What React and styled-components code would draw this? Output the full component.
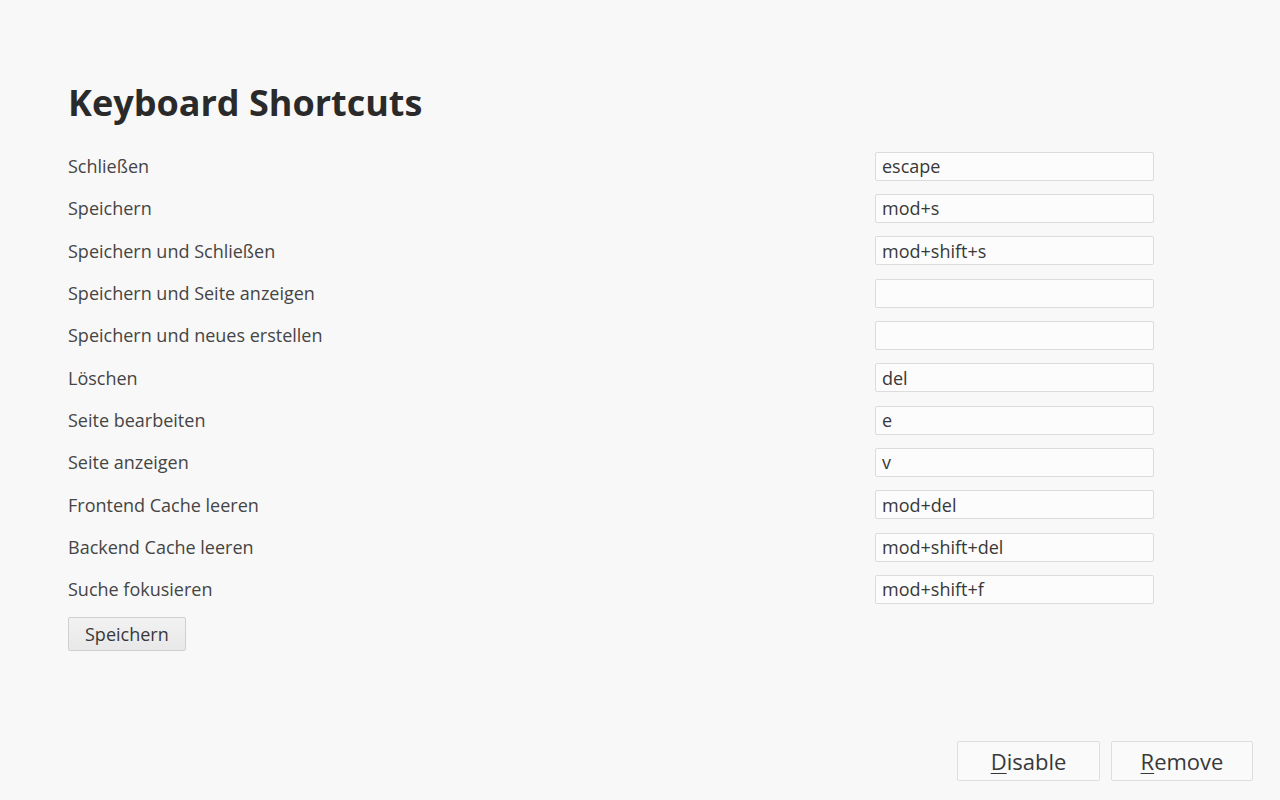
import React from 'react'
import styled, { createGlobalStyle } from 'styled-components'

const GlobalStyle = createGlobalStyle`
  html, body {
    margin: 0;
    padding: 0;
    background: #f8f8f8;
  }
  body {
    font-family: 'Open Sans', 'Noto Sans', sans-serif;
    color: #333;
  }
`

const Page = styled.div`
  display: flex;
  flex-direction: column;
  min-height: 100vh;
  box-sizing: border-box;
`

const Content = styled.div`
  padding: 78px 126px 0 68px;
`

const Title = styled.h1`
  margin: 0 0 17px;
  font-size: 36px;
  font-weight: 700;
  line-height: 50px;
  color: #2a2a2a;
`

const Form = styled.form`
  display: flex;
  flex-direction: column;
`

const Row = styled.label`
  display: flex;
  align-items: center;
  justify-content: space-between;
  height: 42.33px;
  font-size: 18px;
  color: #454545;
`

const KeyInput = styled.input`
  box-sizing: border-box;
  width: 279px;
  height: 29px;
  padding: 0 6px;
  border: 1px solid #dcdcdc;
  border-radius: 2px;
  background: #fcfcfc;
  font-family: inherit;
  font-size: 18px;
  color: #383838;
  outline: none;
`

const SaveButton = styled.button`
  align-self: flex-start;
  margin-top: 6px;
  height: 34px;
  padding: 0 16px;
  border: 1px solid #d0d0d0;
  border-radius: 2px;
  background: linear-gradient(#f2f2f2, #e8e8e8);
  font-family: inherit;
  font-size: 18px;
  color: #383838;
`

const Footer = styled.div`
  margin-top: auto;
  display: flex;
  justify-content: flex-end;
  gap: 11px;
  padding: 0 27px 19px 0;
`

const DialogButton = styled.button`
  width: ${({ $wide }) => ($wide ? 143 : 142)}px;
  height: 40px;
  border: 1px solid #dedede;
  border-radius: 2px;
  background: #fafafa;
  font-family: inherit;
  font-size: 22px;
  color: #383838;

  u {
    text-decoration-thickness: 1px;
    text-underline-offset: 3px;
  }
`

const shortcuts = [
  ['Schließen', 'escape'],
  ['Speichern', 'mod+s'],
  ['Speichern und Schließen', 'mod+shift+s'],
  ['Speichern und Seite anzeigen', ''],
  ['Speichern und neues erstellen', ''],
  ['Löschen', 'del'],
  ['Seite bearbeiten', 'e'],
  ['Seite anzeigen', 'v'],
  ['Frontend Cache leeren', 'mod+del'],
  ['Backend Cache leeren', 'mod+shift+del'],
  ['Suche fokusieren', 'mod+shift+f'],
]

export default function App() {
  return (
    <Page>
      <GlobalStyle />
      <Content>
        <Title>Keyboard Shortcuts</Title>
        <Form onSubmit={e => e.preventDefault()}>
          {shortcuts.map(([label, value]) => (
            <Row key={label}>
              <span>{label}</span>
              <KeyInput defaultValue={value} />
            </Row>
          ))}
          <SaveButton type="submit">Speichern</SaveButton>
        </Form>
      </Content>
      <Footer>
        <DialogButton $wide>
          <u>D</u>isable
        </DialogButton>
        <DialogButton>
          <u>R</u>emove
        </DialogButton>
      </Footer>
    </Page>
  )
}
